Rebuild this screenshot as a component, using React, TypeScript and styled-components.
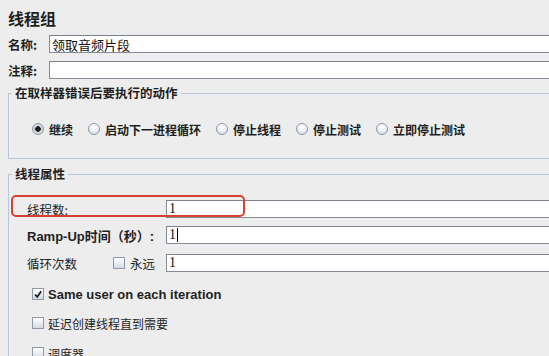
import React from 'react';
import styled, { createGlobalStyle } from 'styled-components';

const GlobalStyle = createGlobalStyle`
  html, body {
    margin: 0;
    padding: 0;
    background: #ededed;
    overflow: hidden;
  }
`;

const CJK = `"Noto Sans CJK SC", "DejaVu Sans", sans-serif`;
const LATIN = `"Liberation Sans", ${CJK}`;

const radioOptions = ['继续', '启动下一进程循环', '停止线程', '停止测试', '立即停止测试'];

const Page = styled.div`
  width: 720px;
  padding: 8px 0 0 8px;
  font-family: ${CJK};
  font-size: 12.5px;
  color: #1f1f1f;
`;

const Title = styled.div`
  font-size: 16px;
  font-weight: bold;
  line-height: 20px;
  height: 20px;
`;

const FieldRow = styled.div<{ $top: number }>`
  display: flex;
  align-items: center;
  margin-top: ${(p) => p.$top}px;
  height: 18px;
`;

const TopLabel = styled.div`
  width: 41px;
  font-weight: bold;
  font-size: 12.5px;
`;

const TextBox = styled.div<{ $cjk?: boolean }>`
  flex: 1;
  height: 18px;
  box-sizing: border-box;
  border: 1px solid #858c98;
  border-top-color: #7b828e;
  background: #ffffff;
  display: flex;
  align-items: center;
  padding-left: 2px;
  font-size: ${(p) => (p.$cjk ? '13px' : '14px')};
  font-family: ${(p) => (p.$cjk ? CJK : `"Liberation Serif", ${CJK}`)};
  color: #111;
`;

const Caret = styled.span`
  display: inline-block;
  width: 1px;
  height: 14px;
  background: #000;
  margin-left: 1px;
`;

const Group = styled.fieldset<{ $top: number }>`
  margin: ${(p) => p.$top}px 0 0 0;
  padding: 0;
  border: 1px solid #b8c6dd;
  border-right: none;
  min-width: 0;
`;

const Legend = styled.legend`
  padding: 0 3px;
  margin-left: 3px;
  line-height: 16px;
  font-weight: bold;
  font-size: 12.5px;
`;

const RadioRow = styled.div`
  display: flex;
  align-items: center;
  gap: 15px;
  height: 16px;
  padding: 20px 0 21px 23px;
`;

const RadioItem = styled.label`
  display: flex;
  align-items: center;
  gap: 5px;
  font-weight: bold;
  font-size: 12px;
`;

const RadioDot = styled.span<{ $on?: boolean }>`
  width: 12px;
  height: 12px;
  box-sizing: border-box;
  border-radius: 50%;
  border: 1px solid #8f98a8;
  background: ${(p) =>
    p.$on
      ? 'radial-gradient(circle, #1c1c1c 0 2.5px, #c9ced6 3px, #e9ebef 100%)'
      : 'radial-gradient(circle at 50% 30%, #ffffff 0%, #eef1f6 45%, #cdd5e2 100%)'};
`;

const PropsBody = styled.div`
  padding: 18px 0 0 18px;
`;

const PropRow = styled.div<{ $top?: number }>`
  position: relative;
  display: flex;
  align-items: center;
  height: 18px;
  margin-top: ${(p) => p.$top ?? 0}px;
`;

const PropLabel = styled.div<{ $bold?: boolean }>`
  width: 139px;
  display: flex;
  align-items: center;
  font-weight: ${(p) => (p.$bold ? 'bold' : 'normal')};
  font-family: ${LATIN};
  font-size: 13px;
`;

const LabelText = styled.span`
  width: 86px;
  font-family: ${CJK};
  font-size: 12.5px;
`;

const ForeverText = styled.span`
  margin-left: 5px;
  font-family: ${CJK};
  font-size: 12.5px;
`;

const Highlight = styled.div`
  position: absolute;
  left: -16px;
  top: -5px;
  width: 234px;
  height: 22px;
  box-sizing: border-box;
  border: 2px solid #d8412f;
  border-radius: 5px;
  pointer-events: none;
`;

const CheckRow = styled.label<{ $top: number; $latin?: boolean }>`
  display: flex;
  align-items: center;
  gap: 4px;
  height: 16px;
  margin: ${(p) => p.$top}px 0 0 5px;
  font-weight: ${(p) => (p.$latin ? 'bold' : 'normal')};
  font-family: ${(p) => (p.$latin ? LATIN : CJK)};
  font-size: ${(p) => (p.$latin ? '13px' : '12px')};
`;

const Box = styled.span`
  width: 12px;
  height: 12px;
  flex: none;
  box-sizing: border-box;
  border: 1px solid #8f98a8;
  background: linear-gradient(#ffffff, #e6eaf0 60%, #d3d9e3);
  display: flex;
  align-items: center;
  justify-content: center;
`;

const CheckMark = () => (
  <svg width="10" height="10" viewBox="0 0 10 10">
    <path d="M2 5.5 L4.2 7.8 L8.2 2.2" fill="none" stroke="#1a1a1a" strokeWidth="1.7" />
  </svg>
);

const App: React.FC = () => {
  return (
    <>
      <GlobalStyle />
      <Page>
        <Title>线程组</Title>

        <FieldRow $top={7}>
          <TopLabel>名称:</TopLabel>
          <TextBox $cjk>领取音频片段</TextBox>
        </FieldRow>
        <FieldRow $top={8}>
          <TopLabel>注释:</TopLabel>
          <TextBox />
        </FieldRow>

        <Group $top={6}>
          <Legend>在取样器错误后要执行的动作</Legend>
          <RadioRow>
            {radioOptions.map((label, index) => (
              <RadioItem key={label}>
                <RadioDot $on={index === 0} />
                {label}
              </RadioItem>
            ))}
          </RadioRow>
        </Group>

        <Group $top={7}>
          <Legend>线程属性</Legend>
          <PropsBody>
            <PropRow>
              <Highlight />
              <PropLabel>
                <LabelText>线程数:</LabelText>
              </PropLabel>
              <TextBox>1</TextBox>
            </PropRow>
            <PropRow $top={8}>
              <PropLabel $bold>Ramp-Up时间（秒）:</PropLabel>
              <TextBox>
                1<Caret />
              </TextBox>
            </PropRow>
            <PropRow $top={10}>
              <PropLabel>
                <LabelText>循环次数</LabelText>
                <Box />
                <ForeverText>永远</ForeverText>
              </PropLabel>
              <TextBox>1</TextBox>
            </PropRow>

            <CheckRow $top={14} $latin>
              <Box>
                <CheckMark />
              </Box>
              Same user on each iteration
            </CheckRow>
            <CheckRow $top={13}>
              <Box />
              延迟创建线程直到需要
            </CheckRow>
            <CheckRow $top={14}>
              <Box />
              调度器
            </CheckRow>
          </PropsBody>
        </Group>
      </Page>
    </>
  );
};

export default App;
